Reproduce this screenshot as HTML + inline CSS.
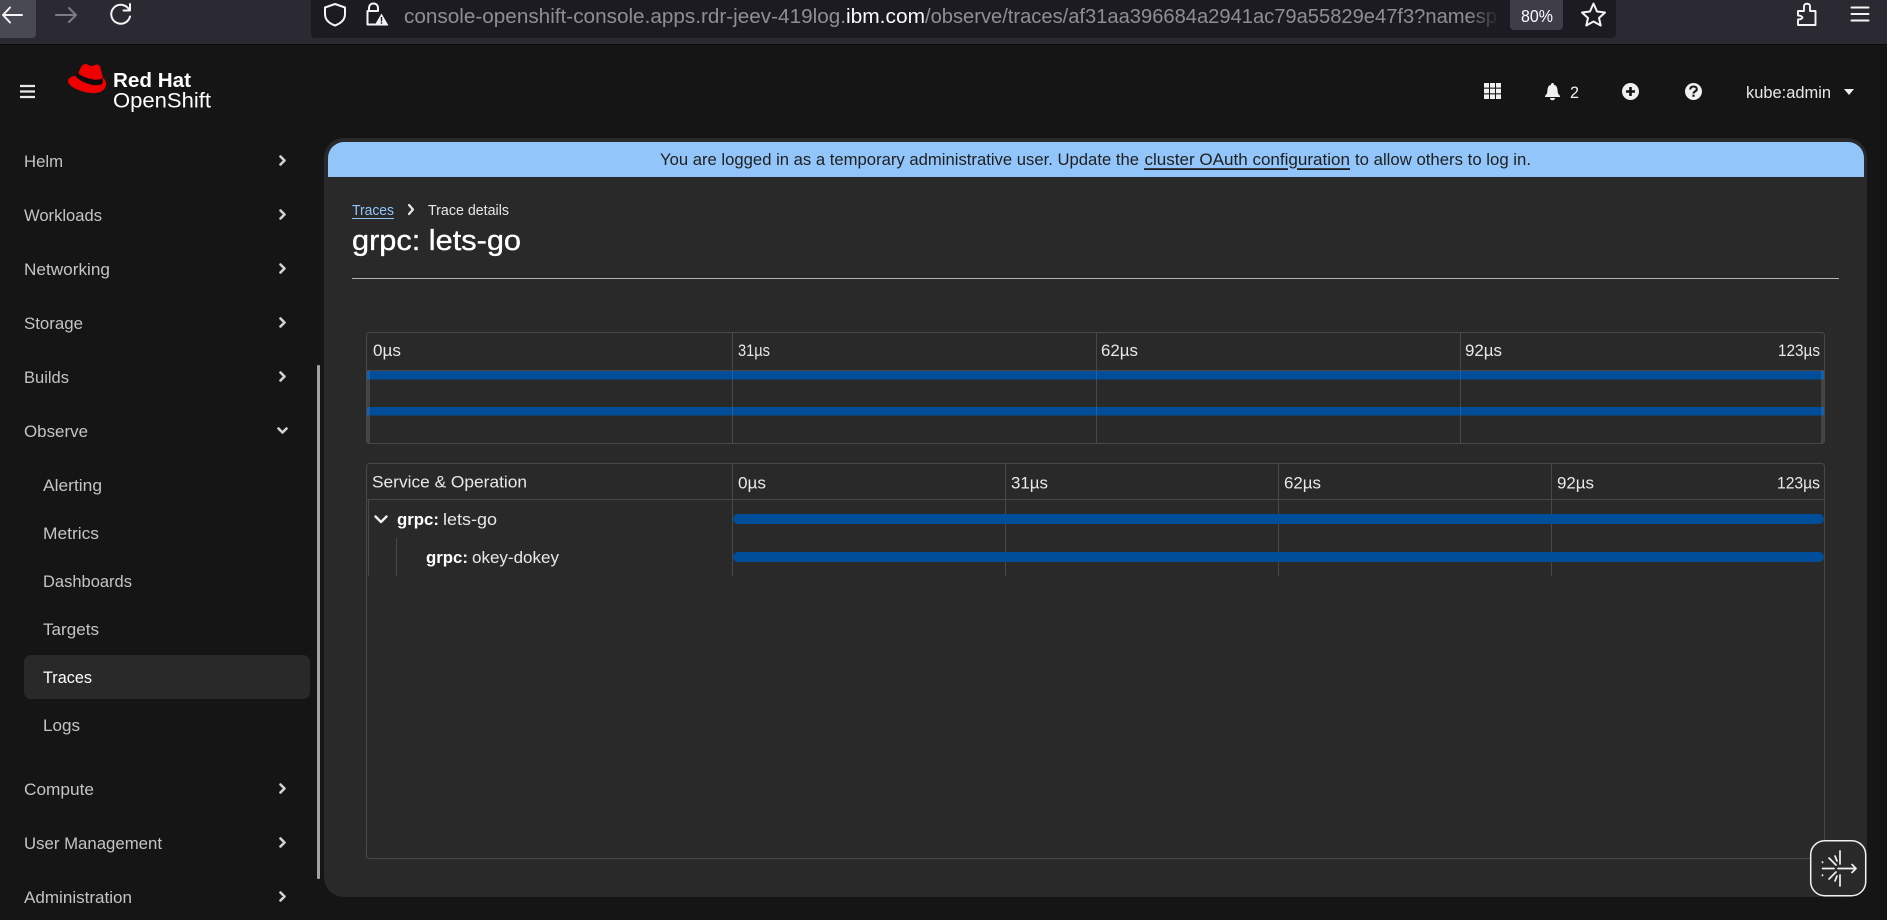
<!DOCTYPE html>
<html lang="en">
<head>
<meta charset="utf-8">
<title>grpc: lets-go · OpenShift</title>
<style>
html,body{margin:0;padding:0;background:#151515;width:1887px;height:920px;overflow:hidden}
svg{display:block}
text{font-family:"Liberation Sans",sans-serif;white-space:pre}
.nav{font-size:16.5px;fill:#c4c4c4}
.t{font-size:16.5px;fill:#e8e8e8}
.url{font-size:20px;fill:#8e8e94}
.ban{font-size:16.5px;fill:#1f1f1f}
.ln{stroke:#484848;stroke-width:1;fill:none}
.chev{fill:none;stroke:#d2d2d2;stroke-width:2.6;stroke-linecap:round;stroke-linejoin:round}
.w{fill:none;stroke:#f4f4f4;stroke-width:2;stroke-linecap:round;stroke-linejoin:round}
</style>
</head>
<body>
<svg width="1887" height="920" viewBox="0 0 1887 920" xmlns="http://www.w3.org/2000/svg">
<defs>
<linearGradient id="fade" x1="0" x2="1" y1="0" y2="0"><stop offset="0" stop-color="#1c1b22" stop-opacity="0"/><stop offset="1" stop-color="#1c1b22"/></linearGradient>
</defs>
<rect width="1887" height="920" fill="#151515"/>

<!-- browser bar -->
<rect width="1887" height="44" fill="#2b2a33"/>
<rect y="44" width="1887" height="1" fill="#0c0c0d"/>
<path d="M0 0H36V34a4 4 0 0 1-4 4H0Z" fill="#494954"/>
<path class="w" d="M3 15H22M10 7.500L3 15L10 22.500"/>
<path d="M56 15H76M69 8L76 15L69 22" fill="none" stroke="#7d7d84" stroke-width="2" stroke-linecap="round" stroke-linejoin="round"/>
<path class="w" d="M129 9.500A9.500 9.500 0 1 0 130 16.500M130 4V10.500H123.500"/>
<path d="M311 0H1616V34a4 4 0 0 1-4 4H315a4 4 0 0 1-4-4Z" fill="#1c1b22"/>
<path class="w" d="M335 4L345 7.500V14C345 20 340.500 23.500 335 25.500C329.500 23.500 325 20 325 14V7.500Z"/>
<path class="w" d="M369 11V8.500C369 5 371 3.500 373.500 3.500C376 3.500 378 5 378 8.500V11M377 11H367.500V24.500H375"/>
<path d="M381.500 13.500L388.500 25.500H374.500Z" fill="#f4f4f4"/>
<rect x="380.800" y="17" width="1.400" height="4.500" fill="#1c1b22"/><rect x="380.800" y="22.300" width="1.400" height="1.500" fill="#1c1b22"/>
<text class="url" x="404" y="23" textLength="442" lengthAdjust="spacingAndGlyphs">console-openshift-console.apps.rdr-jeev-419log.</text>
<text class="url" x="846" y="23" textLength="79" lengthAdjust="spacingAndGlyphs" style="fill:#fbfbfe">ibm.com</text>
<text class="url" x="925" y="23" textLength="572" lengthAdjust="spacingAndGlyphs">/observe/traces/af31aa396684a2941ac79a55829e47f3?namesp</text>
<rect x="1468" y="0" width="32" height="36" fill="url(#fade)"/>
<path d="M1510 0H1563V26a4 4 0 0 1-4 4H1514a4 4 0 0 1-4-4Z" fill="#3f3e48"/>
<text x="1521" y="22" font-size="17.500" fill="#fbfbfe" textLength="32" lengthAdjust="spacingAndGlyphs">80%</text>
<path class="w" d="M1593.500 3.500L1597 11.500L1605 12.500L1599 18L1600.700 25.500L1593.500 21.500L1586.300 25.500L1588 18L1582 12.500L1590 11.500Z"/>
<path class="w" d="M1798 11H1804V6C1804 3 1810 3 1810 6V11H1815.500V25H1798V19.500C1801.500 19.500 1802.500 18 1802.500 17.500S1801 15.500 1798 15.500Z" style="stroke-width:1.900"/>
<path d="M1851.500 7.500H1868.500M1851.500 14H1868.500M1851.500 20.500H1868.500" stroke="#f4f4f4" stroke-width="2" stroke-linecap="round"/>

<!-- masthead -->
<path d="M20 86H35M20 91.500H35M20 97H35" stroke="#e8e8e8" stroke-width="2.200"/>
<path d="M86 64C88 64 89.500 66 91.500 66C93.500 66 95 64.500 97 64.500C99.500 64.500 100.500 67 101 70L103 78C105 79.500 106.200 81.500 106.200 84C106.200 89 101 93.200 94 93.200C83 93.200 68 87 68 81C68 79 70.500 76.500 74 76L77 76.500L80.500 68C81.500 65.500 83.500 64 86 64Z" fill="#ee0000"/>
<path d="M77.300 72.500L75.800 76.300C78 79.500 85 83.800 93 85C98 85.700 102.700 84.800 103 82L102 77.300C101.500 79.500 98 80.200 93.500 79.500C87 78.500 80 75.500 77.300 72.500Z" fill="#0d0d0d"/>
<text x="113" y="87" font-size="20.500" font-weight="700" fill="#fff" textLength="78" lengthAdjust="spacingAndGlyphs">Red Hat</text>
<text x="113" y="107.500" font-size="21" fill="#fff" textLength="98" lengthAdjust="spacingAndGlyphs">OpenShift</text>
<g fill="#f0f0f0">
<rect x="1484" y="83" width="5" height="4.600"/><rect x="1490" y="83" width="5" height="4.600"/><rect x="1496" y="83" width="5" height="4.600"/>
<rect x="1484" y="88.700" width="5" height="4.600"/><rect x="1490" y="88.700" width="5" height="4.600"/><rect x="1496" y="88.700" width="5" height="4.600"/>
<rect x="1484" y="94.400" width="5" height="4.600"/><rect x="1490" y="94.400" width="5" height="4.600"/><rect x="1496" y="94.400" width="5" height="4.600"/>
<path d="M1552.500 83C1553.500 83 1554 83.800 1554 84.800C1556.500 85.500 1557.300 87.500 1557.500 90L1558 93.500L1560 96V97H1545V96L1547 93.500L1547.500 90C1547.700 87.500 1548.500 85.500 1551 84.800C1551 83.800 1551.500 83 1552.500 83ZM1550 98H1555C1555 99.500 1554 100.200 1552.500 100.200C1551 100.200 1550 99.500 1550 98Z"/>
<circle cx="1630.500" cy="91.500" r="8.500"/>
<circle cx="1693.500" cy="91.500" r="8.500"/>
<path d="M1844 89H1854L1849 95Z"/>
</g>
<text x="1570" y="98" font-size="17" fill="#f0f0f0" textLength="9" lengthAdjust="spacingAndGlyphs">2</text>
<path d="M1630.500 87V96M1626 91.500H1635" stroke="#151515" stroke-width="2.600"/>
<path d="M1690.200 89.500C1690.200 87.500 1691.800 86.500 1693.500 86.500C1695.300 86.500 1696.800 87.500 1696.800 89.200C1696.800 91.300 1693.500 91.500 1693.500 93.500" fill="none" stroke="#151515" stroke-width="2.100"/>
<rect x="1692.400" y="94.600" width="2.200" height="2.200" fill="#151515"/>
<text x="1746" y="98" font-size="16.500" fill="#e8e8e8" textLength="85" lengthAdjust="spacingAndGlyphs">kube:admin</text>

<!-- sidebar -->
<text class="nav" x="24" y="167" textLength="39" lengthAdjust="spacingAndGlyphs">Helm</text>
<text class="nav" x="24" y="221" textLength="78" lengthAdjust="spacingAndGlyphs">Workloads</text>
<text class="nav" x="24" y="275" textLength="86" lengthAdjust="spacingAndGlyphs">Networking</text>
<text class="nav" x="24" y="329" textLength="59" lengthAdjust="spacingAndGlyphs">Storage</text>
<text class="nav" x="24" y="383" textLength="45" lengthAdjust="spacingAndGlyphs">Builds</text>
<text class="nav" x="24" y="437" textLength="64" lengthAdjust="spacingAndGlyphs">Observe</text>
<text class="nav" x="43" y="491" textLength="59" lengthAdjust="spacingAndGlyphs">Alerting</text>
<text class="nav" x="43" y="539" textLength="56" lengthAdjust="spacingAndGlyphs">Metrics</text>
<text class="nav" x="43" y="587" textLength="89" lengthAdjust="spacingAndGlyphs">Dashboards</text>
<text class="nav" x="43" y="635" textLength="56" lengthAdjust="spacingAndGlyphs">Targets</text>
<rect x="24" y="655" width="286" height="44" rx="7" fill="#292929"/>
<text class="nav" x="43" y="683" textLength="49" lengthAdjust="spacingAndGlyphs" style="fill:#fff">Traces</text>
<text class="nav" x="43" y="731" textLength="37" lengthAdjust="spacingAndGlyphs">Logs</text>
<text class="nav" x="24" y="795" textLength="70" lengthAdjust="spacingAndGlyphs">Compute</text>
<text class="nav" x="24" y="849" textLength="138" lengthAdjust="spacingAndGlyphs">User Management</text>
<text class="nav" x="24" y="903" textLength="108" lengthAdjust="spacingAndGlyphs">Administration</text>
<path class="chev" d="M280.500 156.500L284.500 160.500L280.500 164.500M280.500 210.500L284.500 214.500L280.500 218.500M280.500 264.500L284.500 268.500L280.500 272.500M280.500 318.500L284.500 322.500L280.500 326.500M280.500 372.500L284.500 376.500L280.500 380.500M278.500 428.500L282.500 432.500L286.500 428.500M280.500 784.500L284.500 788.500L280.500 792.500M280.500 838.500L284.500 842.500L280.500 846.500M280.500 892.500L284.500 896.500L280.500 900.500"/>
<rect x="317" y="365" width="3" height="514" rx="1" fill="#a3a3a3"/>

<!-- main panel -->
<path d="M344 138H1847a20 20 0 0 1 20 20V877a20 20 0 0 1-20 20H344a20 20 0 0 1-20-20V158a20 20 0 0 1 20-20Z" fill="#292929"/>
<path d="M344 142H1848a16 16 0 0 1 16 16V177H328V158a16 16 0 0 1 16-16Z" fill="#92c5f9"/>
<text class="ban" x="660" y="165" textLength="479" lengthAdjust="spacingAndGlyphs">You are logged in as a temporary administrative user. Update the</text>
<text class="ban" x="1144.500" y="165" textLength="205.500" lengthAdjust="spacingAndGlyphs">cluster OAuth configuration</text>
<text class="ban" x="1355" y="165" textLength="176" lengthAdjust="spacingAndGlyphs">to allow others to log in.</text>
<rect x="1144" y="168.200" width="144" height="1.800" fill="#1f1f1f"/><rect x="1297" y="168.200" width="53" height="1.800" fill="#1f1f1f"/>

<text x="352" y="215" font-size="14.500" fill="#92c5f9" textLength="42" lengthAdjust="spacingAndGlyphs">Traces</text>
<rect x="352" y="218" width="42" height="1" fill="#92c5f9"/>
<path d="M409 205L413 209.500L409 214" fill="none" stroke="#e8e8e8" stroke-width="2.200" stroke-linecap="round" stroke-linejoin="round"/>
<text x="428" y="215" font-size="14.500" fill="#e8e8e8" textLength="81" lengthAdjust="spacingAndGlyphs">Trace details</text>
<text x="352" y="250" font-size="29" fill="#fff" stroke="#fff" stroke-width="0.350" textLength="169" lengthAdjust="spacingAndGlyphs">grpc: lets-go</text>
<rect x="352" y="278" width="1487" height="1" fill="#b4b4b4"/>

<!-- minimap -->
<rect x="366.500" y="332.500" width="1458" height="111" rx="3" class="ln"/>
<rect x="367" y="371" width="3" height="72" fill="#444"/>
<rect x="1821" y="371" width="3" height="72" fill="#444"/>
<path class="ln" d="M367 370.500H1824M732.500 333V443M1096.500 333V443M1460.500 333V443"/>
<rect x="367" y="371" width="1457" height="8.500" fill="#004d99"/>
<rect x="367" y="407" width="1457" height="8.500" fill="#004d99"/>
<rect x="367" y="371" width="3" height="8.500" fill="#1a5fa5"/><rect x="367" y="407" width="3" height="8.500" fill="#1a5fa5"/>
<rect x="1821" y="371" width="3" height="8.500" fill="#1a5fa5"/><rect x="1821" y="407" width="3" height="8.500" fill="#1a5fa5"/>
<path class="ln" d="M732.500 371V379.500M1096.500 371V379.500M1460.500 371V379.500M732.500 407V415.500M1096.500 407V415.500M1460.500 407V415.500" style="stroke:#2a5d92"/>
<text class="t" x="373" y="356" textLength="28" lengthAdjust="spacingAndGlyphs">0µs</text>
<text class="t" x="738" y="356" textLength="32" lengthAdjust="spacingAndGlyphs">31µs</text>
<text class="t" x="1101" y="356" textLength="37" lengthAdjust="spacingAndGlyphs">62µs</text>
<text class="t" x="1465" y="356" textLength="37" lengthAdjust="spacingAndGlyphs">92µs</text>
<text class="t" x="1778" y="356" textLength="42" lengthAdjust="spacingAndGlyphs">123µs</text>

<!-- detail -->
<rect x="366.500" y="463.500" width="1458" height="395" rx="3" class="ln"/>
<path class="ln" d="M367 499.500H1824M732.500 464V576M1005.500 464V576M1278.500 464V576M1551.500 464V576M368.500 500V576M396.500 538V576"/>
<rect x="733" y="514" width="1091" height="10" rx="5" fill="#004d99"/>
<rect x="733" y="552" width="1091" height="10" rx="5" fill="#004d99"/>
<text class="t" x="372" y="487.500" textLength="155" lengthAdjust="spacingAndGlyphs">Service &amp; Operation</text>
<text class="t" x="738" y="488.500" textLength="28" lengthAdjust="spacingAndGlyphs">0µs</text>
<text class="t" x="1011" y="488.500" textLength="37" lengthAdjust="spacingAndGlyphs">31µs</text>
<text class="t" x="1284" y="488.500" textLength="37" lengthAdjust="spacingAndGlyphs">62µs</text>
<text class="t" x="1557" y="488.500" textLength="37" lengthAdjust="spacingAndGlyphs">92µs</text>
<text class="t" x="1777" y="488.500" textLength="43" lengthAdjust="spacingAndGlyphs">123µs</text>
<path d="M375.500 516.500L381 522L386.500 516.500" fill="none" stroke="#f0f0f0" stroke-width="2.400" stroke-linecap="round" stroke-linejoin="round"/>
<text class="t" x="397" y="525" font-weight="700" textLength="42" lengthAdjust="spacingAndGlyphs" style="fill:#fff">grpc:</text>
<text class="t" x="443" y="525" textLength="54" lengthAdjust="spacingAndGlyphs">lets-go</text>
<text class="t" x="426" y="563" font-weight="700" textLength="42" lengthAdjust="spacingAndGlyphs" style="fill:#fff">grpc:</text>
<text class="t" x="472" y="563" textLength="87" lengthAdjust="spacingAndGlyphs">okey-dokey</text>

<!-- floating button -->
<rect x="1810.700" y="840.700" width="55" height="55" rx="14" fill="#292929" stroke="#f0f0f0" stroke-width="1.500"/>
<g stroke="#f0f0f0" stroke-width="1.700" fill="none" stroke-linecap="round" stroke-linejoin="round">
<path d="M1840 851V864M1840 875V886M1838 868.500H1856M1852 864.500L1856 868.500L1852 872.500"/>
<path d="M1822.500 868.500H1834M1829 858L1836 865M1829 879L1836 872M1835 856L1837 861M1835 881L1837 876"/>
<path d="M1822.500 862V862.500M1822.500 875V875.500"/>
</g>
</svg>
</body>
</html>
